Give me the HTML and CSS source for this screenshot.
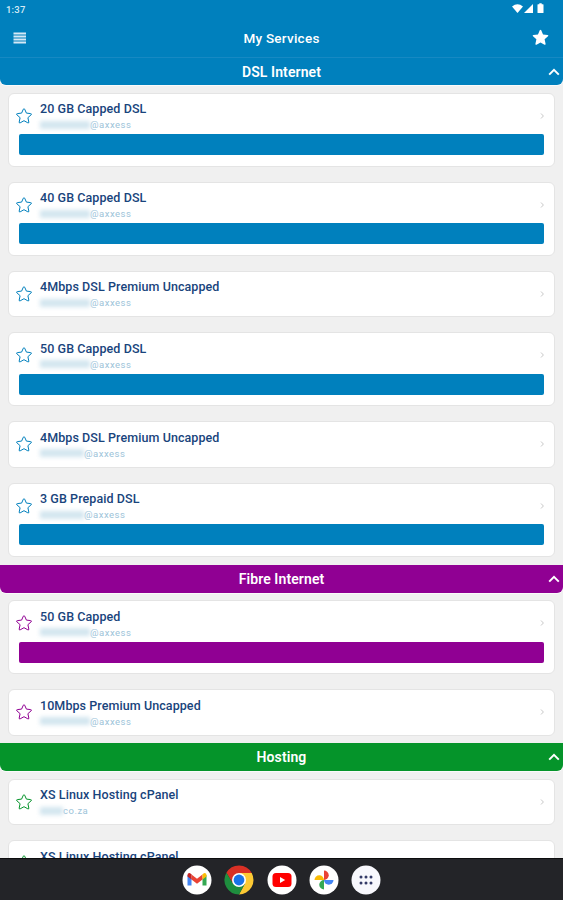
FILE: index.html
```html
<!DOCTYPE html>
<html lang="en">
<head>
    <meta charset="UTF-8">
    <meta name="viewport" content="width=device-width, initial-scale=1.0">
    <title>My Services</title>
    <link rel="stylesheet" href="styles.css">
</head>
<body>
    <svg class="defs" width="0" height="0">
        <symbol id="star" viewBox="0 0 18 18">
            <path d="M8.300 2.200Q9 .9 9.700 2.200L11.400 6.100l4.300.5q1.400.2.400 1.200L12.900 10.700l.9 4.300q.2 1.400-1 .8L9 13.700l-3.800 2.100q-1.200.6-1-.8l.9-4.300L1.900 7.800q-1-1 .4-1.200l4.300-.5z"/>
        </symbol>
        <symbol id="up" viewBox="0 0 12 8">
            <path d="M1.200 6.600L6 1.800l4.800 4.800"/>
        </symbol>
        <symbol id="next" viewBox="0 0 5 8">
            <path d="M1 1.500l2.400 2.500L1 6.500"/>
        </symbol>
    </svg>

    <div class="status-bar">
        <span class="time">1:37</span>
        <svg class="status-icons" width="33" height="12" viewBox="0 0 33 12">
            <path d="M0 3.500Q5.500 -1 11 3.500L5.500 10z"/>
            <path d="M21 1v9h-9z"/>
            <path d="M26 1.300h1.300V.3h2.400v1h1.300q.5 0 .5.500v7.700q0 .5-.5.500h-5q-.5 0-.5-.5V1.800q0-.5.500-.5z"/>
        </svg>
    </div>

    <header class="app-bar">
        <svg class="menu" width="14" height="12" viewBox="0 0 14 12">
            <path d="M.5 1.500h12.500M.5 4.500h12.500M.5 7.500h12.500M.5 10.500h12.500"/>
        </svg>
        <h1>My Services</h1>
        <svg class="favourites" width="19" height="19"><use href="#star"/></svg>
    </header>

    <main class="services">
        <section class="dsl">
            <h2>DSL Internet <svg class="up" width="12" height="8"><use href="#up"/></svg></h2>
            <div class="card">
                <svg class="star" width="18" height="18"><use href="#star"/></svg>
                <div class="info"><h3>20 GB Capped DSL</h3><p><span class="hidden-name"></span>@axxess</p></div>
                <svg class="next" width="5" height="8"><use href="#next"/></svg>
                <div class="usage"></div>
            </div>
            <div class="card">
                <svg class="star" width="18" height="18"><use href="#star"/></svg>
                <div class="info"><h3>40 GB Capped DSL</h3><p><span class="hidden-name"></span>@axxess</p></div>
                <svg class="next" width="5" height="8"><use href="#next"/></svg>
                <div class="usage"></div>
            </div>
            <div class="card">
                <svg class="star" width="18" height="18"><use href="#star"/></svg>
                <div class="info"><h3>4Mbps DSL Premium Uncapped</h3><p><span class="hidden-name"></span>@axxess</p></div>
                <svg class="next" width="5" height="8"><use href="#next"/></svg>
            </div>
            <div class="card">
                <svg class="star" width="18" height="18"><use href="#star"/></svg>
                <div class="info"><h3>50 GB Capped DSL</h3><p><span class="hidden-name"></span>@axxess</p></div>
                <svg class="next" width="5" height="8"><use href="#next"/></svg>
                <div class="usage"></div>
            </div>
            <div class="card">
                <svg class="star" width="18" height="18"><use href="#star"/></svg>
                <div class="info"><h3>4Mbps DSL Premium Uncapped</h3><p><span class="hidden-name medium"></span>@axxess</p></div>
                <svg class="next" width="5" height="8"><use href="#next"/></svg>
            </div>
            <div class="card">
                <svg class="star" width="18" height="18"><use href="#star"/></svg>
                <div class="info"><h3>3 GB Prepaid DSL</h3><p><span class="hidden-name medium"></span>@axxess</p></div>
                <svg class="next" width="5" height="8"><use href="#next"/></svg>
                <div class="usage"></div>
            </div>
        </section>

        <section class="fibre">
            <h2>Fibre Internet <svg class="up" width="12" height="8"><use href="#up"/></svg></h2>
            <div class="card">
                <svg class="star" width="18" height="18"><use href="#star"/></svg>
                <div class="info"><h3>50 GB Capped</h3><p><span class="hidden-name"></span>@axxess</p></div>
                <svg class="next" width="5" height="8"><use href="#next"/></svg>
                <div class="usage"></div>
            </div>
            <div class="card">
                <svg class="star" width="18" height="18"><use href="#star"/></svg>
                <div class="info"><h3>10Mbps Premium Uncapped</h3><p><span class="hidden-name"></span>@axxess</p></div>
                <svg class="next" width="5" height="8"><use href="#next"/></svg>
            </div>
        </section>

        <section class="hosting">
            <h2>Hosting <svg class="up" width="12" height="8"><use href="#up"/></svg></h2>
            <div class="card">
                <svg class="star" width="18" height="18"><use href="#star"/></svg>
                <div class="info"><h3>XS Linux Hosting cPanel</h3><p><span class="hidden-name short"></span>co.za</p></div>
                <svg class="next" width="5" height="8"><use href="#next"/></svg>
            </div>
            <div class="card">
                <svg class="star" width="18" height="18"><use href="#star"/></svg>
                <div class="info"><h3>XS Linux Hosting cPanel</h3></div>
                <svg class="next" width="5" height="8"><use href="#next"/></svg>
            </div>
        </section>
    </main>

    <nav class="dock">
        <svg width="30" height="30" viewBox="0 0 30 30">
            <circle cx="15" cy="15" r="14.500" fill="#fff"/>
            <path d="M5.500 10v10.500h4V13z" fill="#4285f4"/>
            <path d="M24.500 10v10.500h-4V13z" fill="#34a853"/>
            <path d="M9.500 9.500l5.500 4.300 5.500-4.300v5L15 18.800l-5.500-4.300z" fill="#ea4335"/>
            <path d="M5.500 11.500V10q0-2 2-2 1 0 2 1.500v5z" fill="#c5221f"/>
            <path d="M24.500 11.500V10q0-2-2-2-1 0-2 1.500v5z" fill="#fbbc04"/>
        </svg>
        <svg width="30" height="30" viewBox="0 0 30 30">
            <path d="M15 8h12.700A14.500 14.500 0 0 1 15 29.500L21 18.500z" fill="#fcc934"/>
            <path d="M2.440 7.750A14.500 14.500 0 0 1 27.700 8H15L9 11.500 8.800 18.500z" fill="#d93025"/>
            <path d="M2.440 7.750L8.900 18.500 15 22l6-3.500L15 29.500A14.500 14.500 0 0 1 2.440 7.750z" fill="#1e8e3e"/>
            <circle cx="15" cy="15" r="7" fill="#fff"/>
            <circle cx="15" cy="15" r="5.400" fill="#1a73e8"/>
        </svg>
        <svg width="30" height="30" viewBox="0 0 30 30">
            <circle cx="15" cy="15" r="14.500" fill="#fff"/>
            <rect x="5.500" y="8" width="19" height="14" rx="3.500" fill="#f00"/>
            <path d="M13 12v6l5.200-3z" fill="#fff"/>
        </svg>
        <svg width="30" height="30" viewBox="0 0 30 30">
            <circle cx="15" cy="15" r="14.500" fill="#fff"/>
            <path d="M15 5.500a4.750 4.750 0 0 1 0 9.500z" fill="#ea4335"/>
            <path d="M24.500 15a4.750 4.750 0 0 1-9.500 0z" fill="#4285f4"/>
            <path d="M15 24.500a4.750 4.750 0 0 1 0-9.500z" fill="#34a853"/>
            <path d="M5.500 15a4.750 4.750 0 0 1 9.500 0z" fill="#fbbc04"/>
        </svg>
        <svg width="30" height="30" viewBox="0 0 30 30">
            <circle cx="15" cy="15" r="14.500" fill="#f8f8fd"/>
            <g fill="#343b68">
                <circle cx="10" cy="12" r="1.500"/><circle cx="15" cy="12" r="1.500"/><circle cx="20" cy="12" r="1.500"/>
                <circle cx="10" cy="18" r="1.500"/><circle cx="15" cy="18" r="1.500"/><circle cx="20" cy="18" r="1.500"/>
            </g>
        </svg>
    </nav>
</body>
</html>
```
FILE: styles.css
```css
* {
    box-sizing: border-box;
}
body {
    font-family: Roboto, sans-serif;
    margin: 0;
    height: 900px;
    display: flex;
    flex-direction: column;
    overflow: hidden;
    background-color: #f0f0f0;
}
h1, h2, h3, p {
    margin: 0;
}
.defs {
    position: absolute;
}
.status-bar {
    flex: none;
    height: 18px;
    padding: 0 18px 0 6px;
    display: flex;
    justify-content: space-between;
    align-items: center;
    background: #0080bd;
    color: #d5eaf5;
}
.time {
    font-size: 9.5px;
    font-weight: 500;
    letter-spacing: 0.2px;
}
.status-icons {
    fill: #fff;
}
.app-bar {
    flex: none;
    height: 40px;
    padding: 0 13px;
    display: flex;
    justify-content: space-between;
    align-items: center;
    background: #0080bd;
    border-bottom: 1px solid #1689c3;
    color: #fff;
}
.app-bar h1 {
    font-size: 13.5px;
    font-weight: 500;
    letter-spacing: 0.25px;
}
.menu {
    margin-right: 5px;
    stroke: #d5e8f6;
    stroke-width: 2.2;
}
.favourites {
    fill: #fff;
}
.services {
    flex: 1;
    min-height: 0;
    overflow: hidden;
}
section h2 {
    height: 28px;
    margin-bottom: 7.500px;
    padding: 0 3px 0 15px;
    display: flex;
    align-items: center;
    background: var(--color);
    border-radius: 0 0 6px 6px;
    box-shadow: 0 1px 0 #fafafa;
    color: #fff;
    font-size: 14px;
    font-weight: 600;
    letter-spacing: 0.1px;
}
section h2 .up {
    margin-left: auto;
}
section h2::before {
    content: "";
    margin-right: auto;
}
.dsl {
    --color: #0080bd;
}
.dsl h2 {
    height: 27px;
}
.fibre {
    --color: #900093;
}
.hosting {
    --color: #05942a;
}
.up {
    fill: none;
    stroke: #fff;
    stroke-width: 2;
}
.card {
    margin: 0 8px 15px;
    min-height: 46.300px;
    padding: 7.500px 9px 0 6px;
    display: grid;
    grid-template-columns: 18px 1fr 5px;
    column-gap: 7px;
    align-content: start;
    background: #fff;
    border: 1px solid #e4e4e4;
    border-radius: 6px;
}
.card:last-child {
    margin-bottom: 7.700px;
}
.star {
    margin-top: 5.500px;
    fill: none;
    stroke: var(--color);
    stroke-width: 1;
}
.info {
    height: 32px;
}
.info h3 {
    font-size: 12.5px;
    line-height: 16px;
    font-weight: 500;
    letter-spacing: 0.08px;
    color: #19447c;
}
.info p {
    display: flex;
    align-items: center;
    font-size: 9.5px;
    line-height: 15px;
    letter-spacing: 0.5px;
    color: #9cc3d9;
}
.hidden-name {
    width: 50px;
    height: 8px;
    background: #d3e6ef;
    filter: blur(2px);
}
.hidden-name.medium {
    width: 44px;
}
.hidden-name.short {
    width: 23px;
}
.next {
    margin-top: 10.500px;
    fill: none;
    stroke: #c8c8c8;
    stroke-width: 1;
}
.usage {
    grid-column: 1 / -1;
    height: 21px;
    margin: 1.200px 1px 10.500px 4px;
    background: var(--color);
    border-radius: 2px;
}
.dock {
    flex: none;
    height: 42px;
    display: flex;
    justify-content: center;
    align-items: center;
    gap: 12.200px;
    background: #232428;
    border-top: 1px solid #0d0d0e;
}
```
